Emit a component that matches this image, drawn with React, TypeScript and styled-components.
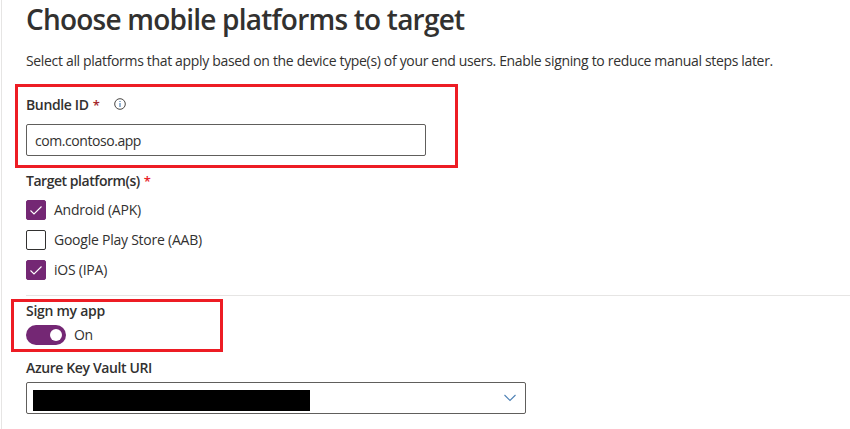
import React from "react";
import styled, { createGlobalStyle } from "styled-components";

const GlobalStyle = createGlobalStyle`
  *, *::before, *::after { box-sizing: border-box; }
  body {
    margin: 0;
    background: #fff;
    color: #323130;
    font: 400 14px/20px "Open Sans", "Noto Sans", sans-serif;
    overflow: hidden;
  }
`;

const Panel = styled.main`
  height: 429px;
  margin-left: 1px;
  padding-left: 24px;
  border-left: 1px solid #e6e5e4;
  white-space: nowrap;
`;

const Title = styled.h1`
  margin: 0;
  font-size: 28px;
  line-height: 39px;
  font-weight: 600;
  letter-spacing: -0.78px;
`;

const Description = styled.p`
  margin: 12px 0 0;
  letter-spacing: -0.332px;
`;

const Group = styled.section<{ $top: number }>`
  position: relative;
  margin-top: ${(p) => p.$top}px;
`;

/* Red callout drawn around a group without affecting its layout. */
const Callout = styled.div<{ $top: number; $left: number; $width: number; $height: number }>`
  position: absolute;
  top: ${(p) => p.$top}px;
  left: ${(p) => p.$left}px;
  width: ${(p) => p.$width}px;
  height: ${(p) => p.$height}px;
  border: 3px solid #ed1c24;
  pointer-events: none;
`;

const LabelRow = styled.div`
  display: flex;
  height: 20px;
`;

const Label = styled.span<{ $spacing: number }>`
  font-weight: 600;
  letter-spacing: ${(p) => p.$spacing}px;
`;

const Required = styled.span<{ $color: string }>`
  width: 7px;
  margin-left: 4px;
  color: ${(p) => p.$color};
  font-size: 13px;
  font-weight: 600;
`;

const InfoIcon = styled.svg`
  margin: 3px 0 0 14px;
  width: 12px;
  height: 12px;
`;

const TextField = styled.div`
  display: flex;
  align-items: center;
  width: 400px;
  height: 32px;
  margin-top: 9px;
  padding: 2px 8px 0;
  border: 1px solid #605e5c;
  border-radius: 2px;
`;

const Text = styled.span<{ $spacing?: number }>`
  letter-spacing: ${(p) => p.$spacing ?? 0}px;
`;

const Options = styled.div`
  display: grid;
  gap: 10px;
  margin-top: 9px;
`;

const Option = styled.div`
  display: flex;
  gap: 8px;
  height: 20px;
`;

const Box = styled.span<{ $checked: boolean }>`
  width: 20px;
  height: 20px;
  border: 1px solid ${(p) => (p.$checked ? "#742774" : "#323130")};
  border-radius: 2px;
  background: ${(p) => (p.$checked ? "#742774" : "#fff")};
  svg { display: block; width: 18px; height: 18px; }
`;

const Divider = styled.hr`
  height: 1px;
  margin: 15px 0 0;
  border: 0;
  background: #e6e5e4;
`;

const ToggleRow = styled.div`
  display: flex;
  gap: 8px;
  height: 20px;
  margin-top: 4px;
`;

const Toggle = styled.span`
  display: flex;
  align-items: center;
  justify-content: flex-end;
  width: 40px;
  height: 20px;
  padding-right: 4px;
  border-radius: 10px;
  background: #742774;
`;

const Knob = styled.span`
  width: 12px;
  height: 12px;
  border-radius: 50%;
  background: #fff;
`;

const Select = styled.div`
  display: flex;
  justify-content: space-between;
  width: 500px;
  height: 32px;
  margin-top: 4px;
  padding: 7px 8px 0 6px;
  border: 1px solid #605e5c;
  border-radius: 2px;
`;

const Redacted = styled.span`
  width: 277px;
  height: 21px;
  background: #000;
`;

const Chevron = styled.svg`
  width: 14px;
  height: 16px;
`;

const platforms = [
  { name: "Android (APK)", checked: true, spacing: -0.24 },
  { name: "Google Play Store (AAB)", checked: false, spacing: -0.24 },
  { name: "iOS (IPA)", checked: true, spacing: -0.24 },
];

export default function App() {
  return (
    <>
      <GlobalStyle />
      <Panel>
        <Title>Choose mobile platforms to target</Title>
        <Description>
          Select all platforms that apply based on the device type(s) of your end users. Enable signing to reduce manual steps later.
        </Description>

        <Group $top={24}>
          <LabelRow>
            <Label $spacing={-0.36}>Bundle ID</Label>
            <Required $color="#a4262c">*</Required>
            <InfoIcon viewBox="0 0 12 12" fill="none">
              <circle cx="6" cy="6" r="5.3" stroke="#484644" />
              <path d="M6 5v4M6 3v1" stroke="#4d80b5" strokeWidth="1.2" />
            </InfoIcon>
          </LabelRow>
          <TextField>
            <Text $spacing={-0.44}>com.contoso.app</Text>
          </TextField>
          <Callout $top={-11} $left={-11} $width={443} $height={84} />
        </Group>

        <Group $top={15}>
          <LabelRow>
            <Label $spacing={-0.46}>Target platform(s)</Label>
            <Required $color="#e8212b">*</Required>
          </LabelRow>
          <Options>
            {platforms.map((p) => (
              <Option key={p.name}>
                <Box $checked={p.checked}>
                  {p.checked && (
                    <svg viewBox="0 0 18 18" fill="none">
                      <path d="M3.5 9.5 7 13l7.5-7.5" stroke="#fff" strokeWidth="1.1" />
                    </svg>
                  )}
                </Box>
                <Text $spacing={p.spacing}>{p.name}</Text>
              </Option>
            ))}
          </Options>
        </Group>

        <Divider />

        <Group $top={5}>
          <LabelRow>
            <Label $spacing={-0.28}>Sign my app</Label>
          </LabelRow>
          <ToggleRow>
            <Toggle>
              <Knob />
            </Toggle>
            <Text $spacing={-0.3}>On</Text>
          </ToggleRow>
          <Callout $top={-2} $left={-15} $width={212} $height={53} />
        </Group>

        <Group $top={13}>
          <LabelRow>
            <Label $spacing={-0.38}>Azure Key Vault URI</Label>
          </LabelRow>
          <Select>
            <Redacted />
            <Chevron viewBox="0 0 14 16" fill="none">
              <path d="M1.500 5 7 10.500 12.500 5" stroke="#4d80b5" strokeWidth="1.1" />
            </Chevron>
          </Select>
        </Group>
      </Panel>
    </>
  );
}
